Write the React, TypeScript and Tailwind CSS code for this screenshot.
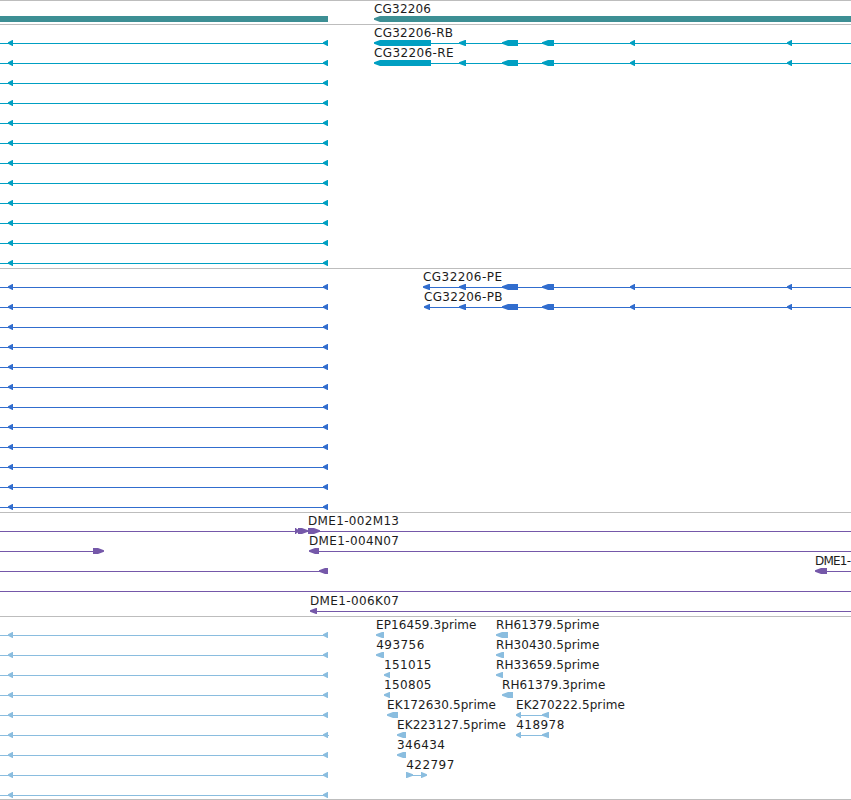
import React from 'react';

type Feature = { start: number; end: number; dir?: 'left' | 'right' | 'none'; head?: number };
type Line = [number, number];
type Label = { x: number; text: string; width?: number };
type Row = { lines?: Line[]; features?: Feature[]; labels?: Label[] };
type Track = { id: string; color: string; rows: Row[]; pad?: boolean };

const VIEW_WIDTH = 851;

// Helpers
const f = (start: number, end: number, dir: Feature['dir'] = 'left', head?: number): Feature => ({ start, end, dir, head });

const featurePoints = ({ start, end, dir, head }: Feature) => {
    const h = head ?? Math.min(6, end - start - 0.6);
    if (dir === 'none') return `${start},13 ${end},13 ${end},19 ${start},19`;
    if (dir === 'right') return `${start},13 ${end - h},13 ${end},15.3 ${end},16.7 ${end - h},19 ${start},19`;
    return `${end},13 ${start + h},13 ${start},15.3 ${start},16.7 ${start + h},19 ${end},19`;
};

// Left-hand gene, repeated on every row
const leftLine: Line = [0, 328];
const leftFeatures = [f(8, 13), f(323, 328)];
const exons = [f(459, 466), f(502, 518), f(542, 554), f(630, 635), f(787, 792)];
const leftRow: Row = { lines: [leftLine], features: leftFeatures };
const fill = (rows: Row[], total: number): Row[] => [...rows, ...Array.from({ length: total - rows.length }, () => leftRow)];

const withLeft = (features: Feature[], labels: Label[], lines: Line[] = []): Row => ({
    lines: [leftLine, ...lines],
    features: [...leftFeatures, ...features],
    labels,
});

const tracks: Track[] = [
    {
        id: 'gene', color: '#3d8f94', pad: true,
        rows: [{ features: [f(0, 328, 'none'), f(374, 851)], labels: [{ x: 374, text: 'CG32206', width: 57 }] }],
    },
    {
        id: 'transcript', color: '#009fc2', pad: true,
        rows: fill([
            withLeft([f(374, 431), ...exons], [{ x: 374, text: 'CG32206-RB', width: 79 }], [[431, 851]]),
            withLeft([f(374, 431), ...exons], [{ x: 374, text: 'CG32206-RE', width: 79.5 }], [[431, 851]]),
        ], 12),
    },
    {
        id: 'cds', color: '#316dce', pad: true,
        rows: fill([
            withLeft([f(423, 430), ...exons], [{ x: 423, text: 'CG32206-PE', width: 79 }], [[424, 851]]),
            withLeft([f(424, 430), ...exons], [{ x: 424, text: 'CG32206-PB', width: 78.5 }], [[425, 851]]),
        ], 12),
    },
    {
        id: 'bac', color: '#7558a9', pad: true,
        rows: [
            { lines: [[0, 851]], features: [f(295, 296, 'right', 0), f(295, 299, 'right', 3.5), f(298, 308, 'right'), f(308, 320, 'right')], labels: [{ x: 308, text: 'DME1-002M13', width: 91 }] },
            { lines: [[0, 93], [310, 851]], features: [f(93, 104, 'right'), f(309, 319)], labels: [{ x: 309, text: 'DME1-004N07', width: 90 }] },
            { lines: [[0, 320], [820, 851]], features: [f(319, 328), f(815, 827)], labels: [{ x: 815, text: 'DME1-', width: 36 }] },
            { lines: [[0, 851]] },
            { lines: [[311, 851]], features: [f(310, 317)], labels: [{ x: 310, text: 'DME1-006K07', width: 89 }] },
        ],
    },
    {
        id: 'est', color: '#8abddf',
        rows: fill([
            withLeft([f(376, 384), f(496, 508)], [{ x: 376, text: 'EP16459.3prime', width: 100.5 }, { x: 496, text: 'RH61379.5prime', width: 103.3 }]),
            withLeft([f(376, 384), f(496, 504)], [{ x: 376.3, text: '493756', width: 48 }, { x: 496, text: 'RH30430.5prime', width: 103.3 }]),
            withLeft([f(384, 390), f(496, 503)], [{ x: 384, text: '151015', width: 47.5 }, { x: 496, text: 'RH33659.5prime', width: 103.3 }]),
            withLeft([f(384, 390), f(502, 513)], [{ x: 384, text: '150805', width: 47.5 }, { x: 502, text: 'RH61379.3prime', width: 103.3 }]),
            withLeft([f(387, 398), f(516, 521), f(542, 549)], [{ x: 387, text: 'EK172630.5prime', width: 109 }, { x: 516, text: 'EK270222.5prime', width: 109 }], [[517, 549]]),
            withLeft([f(397, 406), f(516, 521), f(542, 549)], [{ x: 397, text: 'EK223127.5prime', width: 109 }, { x: 516.3, text: '418978', width: 48 }], [[517, 549], [328, 329]]),
            withLeft([f(397, 406)], [{ x: 397, text: '346434', width: 48 }]),
            withLeft([f(406, 413, 'right'), f(421, 427, 'right')], [{ x: 406.3, text: '422797', width: 48 }], [[406, 426]]),
        ], 9),
    },
];

const TrackRow: React.FC<{ row: Row; color: string }> = ({ row, color }) => (
    <svg width={VIEW_WIDTH} height={20} className="block overflow-visible">
        {row.lines?.map(([from, to], i) => (
            <rect key={i} x={from} y={16} width={to - from} height={1} fill={color} />
        ))}
        {row.features?.map((feature, i) => (
            <polygon key={i} points={featurePoints(feature)} fill={color} />
        ))}
        {row.labels?.map((label, i) => (
            <text key={i} x={label.x} y={10} textLength={label.width} fill="#1c1c1c">{label.text}</text>
        ))}
    </svg>
);

export default function App() {
    return (
        <div className="w-[851px] h-[800px] overflow-hidden bg-white font-['DejaVu_Sans',sans-serif] text-[12px]">
            {tracks.map(track => (
                <section key={track.id} className={track.pad ? 'border-t border-[#bdbdbd] pt-0.5 pb-px' : 'border-y border-[#bdbdbd] pt-0.5'}>
                    {track.rows.map((row, i) => <TrackRow key={i} row={row} color={track.color} />)}
                </section>
            ))}
        </div>
    );
}
